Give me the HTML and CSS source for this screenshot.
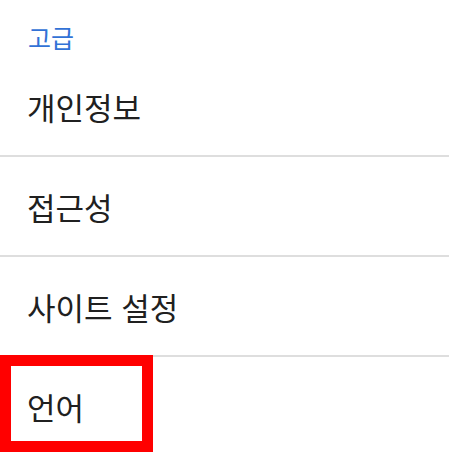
FILE: index.html
```html
<!DOCTYPE html>
<html lang="ko">
<head>
  <meta charset="UTF-8" />
  <meta name="viewport" content="width=device-width, initial-scale=1" />
  <title>고급 설정</title>
  <link rel="stylesheet" href="styles.css">
</head>
<body>
  <section class="settings">
    <h2 class="section-title">고급</h2>
    <ul class="menu">
      <li class="menu-item">개인정보</li>
      <li class="menu-item">접근성</li>
      <li class="menu-item">사이트 설정</li>
      <li class="menu-item highlighted">
        <span class="highlight-box"></span>
        언어
      </li>
    </ul>
  </section>
</body>
</html>
```

FILE: styles.css
```css
body {
  margin: 0;
  background-color: #fff;
  font-family: 'Noto Sans CJK KR', 'Noto Sans', sans-serif;
  color: #202020;
  overflow: hidden;
}

.section-title {
  margin: 0;
  height: 57px;
  padding: 19px 28px 0;
  box-sizing: border-box;
  font-size: 25px;
  line-height: 36px;
  font-weight: 400;
  color: #3272d6;
}

.menu {
  list-style: none;
  margin: 0;
  padding: 0;
}

.menu-item {
  position: relative;
  height: 98px;
  padding: 0 27px;
  display: flex;
  align-items: center;
  font-size: 31px;
  border-bottom: 2px solid #dedede;
}

.menu-item:last-child {
  border-bottom: none;
}

/* red annotation frame over the last row */
.highlight-box {
  position: absolute;
  left: 0;
  top: -2px;
  width: 153px;
  height: 97px;
  box-sizing: border-box;
  border: 11px solid #f00;
}
```
